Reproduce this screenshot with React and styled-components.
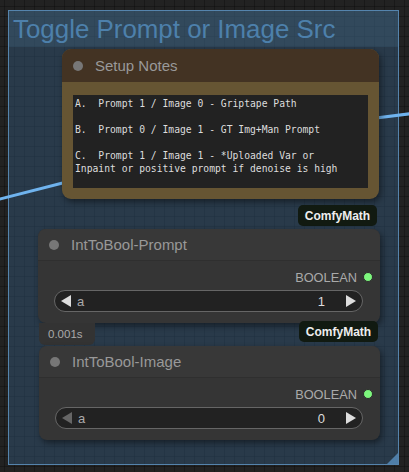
import React from 'react';
import styled, { createGlobalStyle } from 'styled-components';

const GlobalStyle = createGlobalStyle`
  html, body {
    margin: 0;
    padding: 0;
    background: #222;
  }
  body {
    font-family: "Liberation Sans", Arial, sans-serif;
  }
`;

const notes = `A.  Prompt 1 / Image 0 - Griptape Path

B.  Prompt 0 / Image 1 - GT Img+Man Prompt

C.  Prompt 1 / Image 1 - *Uploaded Var or
Inpaint or positive prompt if denoise is high`;

function LinkLines() {
  return (
    <StLinks width="409" height="472" viewBox="0 0 409 472">
      <line x1="-2" y1="199.5" x2="90" y2="176" stroke="#6fb3ee" strokeWidth="3" />
      <line x1="360" y1="120" x2="412" y2="113.5" stroke="#6fb3ee" strokeWidth="3" />
    </StLinks>
  );
}

function NumberWidget({ label, value, canDecrease }) {
  return (
    <StWidget>
      <StArrowLeft $dim={!canDecrease} />
      <StWidgetLabel>{label}</StWidgetLabel>
      <StWidgetValue>{value}</StWidgetValue>
      <StArrowRight />
    </StWidget>
  );
}

function IntToBoolNode({ title, value, left, top, width }) {
  return (
    <StNode style={{ left, top, width }}>
      <StNodeHeader>
        <StDot />
        <StNodeTitle>{title}</StNodeTitle>
      </StNodeHeader>
      <StNodeBody>
        <StOutputRow>
          BOOLEAN
          <StSlot />
        </StOutputRow>
        <NumberWidget label="a" value={value} canDecrease={value > 0} />
      </StNodeBody>
    </StNode>
  );
}

export default function App() {
  return (
    <>
      <GlobalStyle />
      <StCanvas>
        <StGroup>
          <StGroupTitle>Toggle Prompt or Image Src</StGroupTitle>
          <StGroupResize />
        </StGroup>

        <LinkLines />

        <StNoteNode>
          <StNoteHeader>
            <StDot />
            <StNodeTitle>Setup Notes</StNodeTitle>
          </StNoteHeader>
          <StNoteBody>
            <StNoteText>{notes}</StNoteText>
          </StNoteBody>
        </StNoteNode>

        <StBadge style={{ left: 298, top: 205 }}>ComfyMath</StBadge>

        <IntToBoolNode title="IntToBool-Prompt" value={1} left={38} top={229} width={342} />

        <StTiming>0.001s</StTiming>
        <StBadge style={{ left: 299, top: 321 }}>ComfyMath</StBadge>

        <IntToBoolNode title="IntToBool-Image" value={0} left={39} top={346} width={341} />
      </StCanvas>
    </>
  );
}

const StCanvas = styled.div`
  position: relative;
  width: 409px;
  height: 472px;
  overflow: hidden;
  background-color: #222;
  background-image:
    linear-gradient(to right, rgba(0, 0, 0, 0.25) 1px, transparent 1px),
    linear-gradient(to bottom, rgba(0, 0, 0, 0.25) 1px, transparent 1px);
  background-size: 10px 10px;
  background-position: 4px 6px;
`;

const StGroup = styled.div`
  position: absolute;
  left: 8px;
  top: 10px;
  width: 391px;
  height: 455px;
  box-sizing: border-box;
  border: 1px solid #5584ad;
  background: rgba(53, 94, 132, 0.42);
  display: flex;
  flex-direction: column;
`;

const StGroupTitle = styled.div`
  height: 36px;
  flex-shrink: 0;
  background: rgba(80, 120, 150, 0.24);
  color: #4d80ab;
  font-size: 25.9px;
  line-height: 36px;
  padding-left: 4px;
  white-space: nowrap;
`;

const StGroupResize = styled.div`
  position: absolute;
  right: 0;
  bottom: 0;
  width: 0;
  height: 0;
  border-left: 11px solid transparent;
  border-bottom: 11px solid #4f7ea8;
`;

const StLinks = styled.svg`
  position: absolute;
  left: 0;
  top: 0;
`;

const StNoteNode = styled.div`
  position: absolute;
  left: 62px;
  top: 49px;
  width: 317px;
  height: 150px;
  border-radius: 9px;
  overflow: hidden;
  background: #665533;
  box-shadow: 2px 3px 6px rgba(0, 0, 0, 0.45);
  display: flex;
  flex-direction: column;
`;

const StNoteHeader = styled.div`
  height: 33px;
  background: #433323;
  display: flex;
  align-items: center;
  padding-left: 11px;
  gap: 12px;
`;

const StNoteBody = styled.div`
  flex: 1;
  padding: 13px 11px 11px 11px;
  display: flex;
`;

const StNoteText = styled.div`
  flex: 1;
  background: #222;
  color: #ddd;
  font-family: "DejaVu Sans Mono", "Liberation Mono", monospace;
  font-size: 9.7px;
  line-height: 13px;
  padding: 2px 2px;
  white-space: pre;
`;

const StDot = styled.span`
  width: 10px;
  height: 10px;
  border-radius: 50%;
  background: #777;
  flex-shrink: 0;
`;

const StNodeTitle = styled.span`
  color: #999;
  font-size: 15px;
  white-space: nowrap;
`;

const StNode = styled.div`
  position: absolute;
  height: 94px;
  border-radius: 8px;
  overflow: hidden;
  background: #353535;
  box-shadow: 2px 3px 6px rgba(0, 0, 0, 0.45);
  display: flex;
  flex-direction: column;
`;

const StNodeHeader = styled.div`
  height: 31px;
  background: #383838;
  border-bottom: 1px solid #2f2f2f;
  display: flex;
  align-items: center;
  padding-left: 11px;
  gap: 12px;
`;

const StNodeBody = styled.div`
  padding: 8px 17px 0 16px;
  display: flex;
  flex-direction: column;
  gap: 5px;
`;

const StOutputRow = styled.div`
  display: flex;
  justify-content: flex-end;
  align-items: center;
  gap: 6px;
  margin-right: -10px;
  color: #aaa;
  font-size: 12.8px;
  height: 16px;
`;

const StSlot = styled.span`
  width: 8px;
  height: 8px;
  border-radius: 50%;
  background: #7df77d;
  border: 1px solid #2c2c2c;
`;

const StWidget = styled.div`
  height: 22px;
  box-sizing: border-box;
  border: 1px solid #666;
  border-radius: 11px;
  background: #222;
  display: flex;
  align-items: center;
  padding: 0 6px 0 6px;
  font-size: 13px;
`;

const StArrowLeft = styled.span`
  width: 0;
  height: 0;
  border-top: 6px solid transparent;
  border-bottom: 6px solid transparent;
  border-right: 10px solid ${(p) => (p.$dim ? '#666' : '#ddd')};
`;

const StArrowRight = styled.span`
  width: 0;
  height: 0;
  border-top: 6px solid transparent;
  border-bottom: 6px solid transparent;
  border-left: 10px solid #ddd;
`;

const StWidgetLabel = styled.span`
  color: #aaa;
  margin-left: 6px;
  flex: 1;
`;

const StWidgetValue = styled.span`
  color: #ddd;
  margin-right: 21px;
`;

const StBadge = styled.div`
  position: absolute;
  width: 79px;
  height: 21px;
  box-sizing: border-box;
  border-radius: 5px;
  background: #111a11;
  color: #eee;
  font-weight: bold;
  font-size: 12px;
  display: flex;
  align-items: center;
  justify-content: center;
`;

const StTiming = styled.div`
  position: absolute;
  left: 39px;
  top: 323px;
  width: 56px;
  height: 22px;
  border-radius: 0 0 6px 6px;
  background: #333;
  color: #aaa;
  font-size: 11.5px;
  display: flex;
  align-items: center;
  padding-left: 9px;
  box-sizing: border-box;
`;
